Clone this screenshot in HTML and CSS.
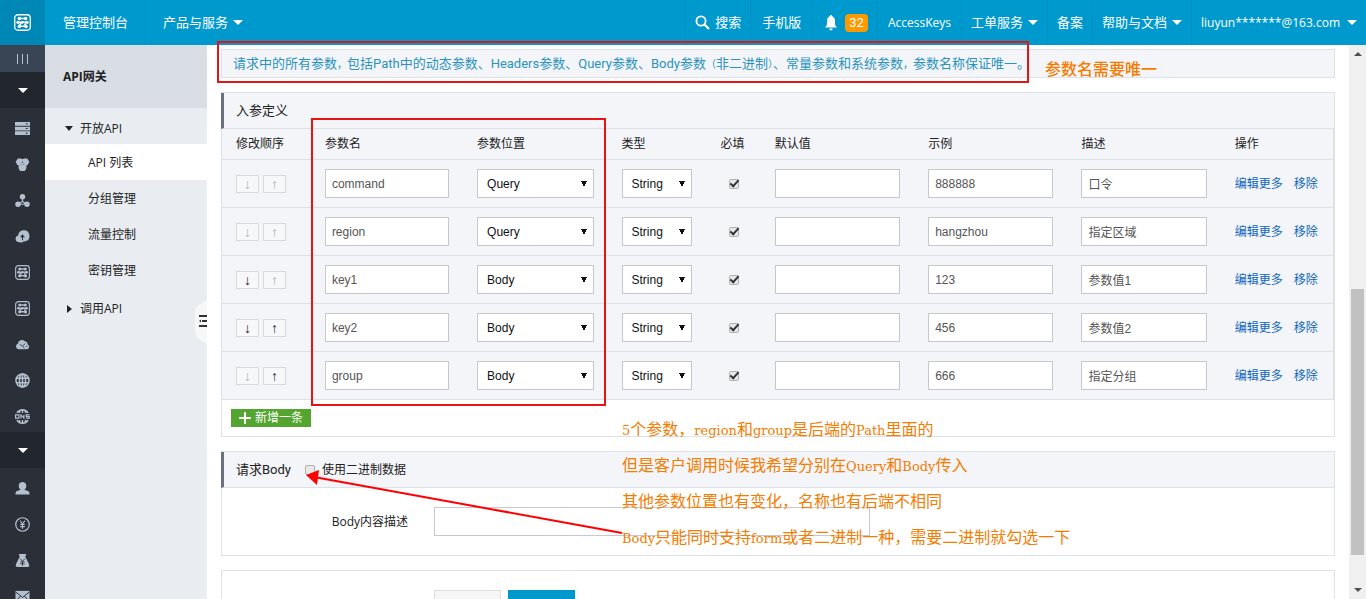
FILE: index.html
```html
<!DOCTYPE html>
<html lang="zh-CN">
<head>
<meta charset="utf-8">
<title>API网关</title>
<link rel="stylesheet" href="styles.css">
</head>
<body>
<svg class="defs" aria-hidden="true">
  <symbol id="i-cloud" viewBox="0 0 16 16"><rect x=".7" y=".7" width="14.6" height="14.6" rx="3" fill="none" stroke="currentColor" stroke-width="1.2"/><path d="M4.500 4.200h7M3 7.800h10M7 8l-2.500 3.500h7M10 9l2 3" fill="none" stroke="currentColor" stroke-width="1.500"/><g fill="currentColor"><circle cx="5" cy="4.200" r="1.600"/><circle cx="11" cy="4.200" r="1.600"/><circle cx="3.700" cy="7.800" r="1.500"/><circle cx="8" cy="7.800" r="1.300"/><circle cx="12.300" cy="7.800" r="1.500"/><circle cx="5" cy="11.700" r="1.500"/><circle cx="11.300" cy="11.700" r="1.600"/></g></symbol>
  <symbol id="i-server" viewBox="0 0 16 16"><path fill="currentColor" fill-rule="evenodd" d="M0 1h16v4H0zM0 6h16v4H0zM0 11h16v4H0zM11.500 2.500v1h2v-1zM11.500 7.500v1h2v-1zM11.500 12.500v1h2v-1z"/></symbol>
  <symbol id="i-hex" viewBox="0 0 16 16"><path fill="currentColor" d="M3 1.500h3.500L8 2.500l1.500-1H13L15.300 5 13.500 8.500 12 9l.3 2.800-1.800 3h-5l-1.800-3L4 9l-1.500-.5L.7 5z"/><g fill="#2a2f38"><circle cx="8" cy="5.500" r=".7"/><circle cx="6.500" cy="8" r=".5"/><circle cx="9.500" cy="8" r=".5"/></g></symbol>
  <symbol id="i-nodes" viewBox="0 0 16 16"><path d="M8 4v5L3.500 12h9L8 9" fill="none" stroke="currentColor" stroke-width="1.300"/><g fill="currentColor"><circle cx="8" cy="4" r="2.900"/><circle cx="3.200" cy="12" r="2.900"/><circle cx="12.800" cy="12" r="2.900"/></g></symbol>
  <symbol id="i-cdn" viewBox="0 0 16 16"><path fill="currentColor" d="M4 14a3.600 3.600 0 0 1-.6-7.100A6 6 0 1 1 11.500 13l-2.500.3-1 1z"/><path d="M8 6.500v5.500M6 9l2-2.500L10 9" fill="none" stroke="#2a2f38" stroke-width="1.100"/></symbol>
  <symbol id="i-clouds" viewBox="0 0 16 16"><path fill="currentColor" d="M3.500 13a3 3 0 0 1-.4-5.800A4.300 4.300 0 0 1 10.500 4.500 3.600 3.600 0 0 1 13.500 8a2.600 2.600 0 0 1-.5 5z"/><path d="M5 8l3 1.500 3-2.500M8 9.500l2 2.500M11.500 9.500l2 1" fill="none" stroke="#2a2f38" stroke-width=".8"/></symbol>
  <symbol id="i-globe" viewBox="0 0 16 16"><g fill="none" stroke="currentColor" stroke-width="1.600"><circle cx="8" cy="8" r="7"/><ellipse cx="8" cy="8" rx="3.300" ry="7"/><path d="M8 1v14M2 5.500h12M2 10.500h12"/></g></symbol>
  <symbol id="i-ons" viewBox="0 0 16 16"><g fill="none" stroke="currentColor" stroke-width="1.500"><path d="M2 4.200a7 7 0 0 1 12 0M2 11.800a7 7 0 0 0 12 0M8 1v3.200M8 11.800V15M5.300 2l-.8 2.200M10.700 2l.8 2.200M5.300 14l-.8-2.200M10.700 14l.8-2.200"/><path d="M.6 6.300h3.600v3.400H.6zM6.300 10V6.300l3.200 3.400V6M15.500 6.300h-3.600V8h3.300v1.700h-3.500" stroke-width="1.200"/></g></symbol>
  <symbol id="i-user" viewBox="0 0 16 16"><path fill="currentColor" d="M8 1a4 4 0 0 1 4 4.200c0 1.800-.8 3-2 4l4.500 1.600q1.200.8 1 3.700H.5q-.2-2.900 1-3.700L6 9.200c-1.200-1-2-2.200-2-4A4 4 0 0 1 8 1z"/></symbol>
  <symbol id="i-yen" viewBox="0 0 16 16"><g fill="none" stroke="currentColor" stroke-width="1.300"><circle cx="8" cy="8" r="7.200"/><path d="M5.500 4L8 7.500 10.500 4M8 7.500V12.500M5.500 8h5M5.500 10.200h5"/></g></symbol>
  <symbol id="i-bag" viewBox="0 0 16 16"><path fill="currentColor" d="M4 1h8l-1 3 4 8q.8 2.700-1 3H2q-1.800-.3-1-3l4-8z"/><path d="M5.500 6L8 9l2.500-3M8 9v4.500M5.700 9.500h4.600M5.700 11.500h4.600" fill="none" stroke="#2a2f38" stroke-width=".9"/></symbol>
  <symbol id="i-mail" viewBox="0 0 16 16"><path fill="currentColor" d="M.5 2h15v12H.5z"/><path d="M.5 3L8 9l7.500-6M1 13l5-5.500M15 13l-5-5.500" fill="none" stroke="#2a2f38"/></symbol>
</svg>

<header class="topbar">
  <a class="logo" href="#" aria-label="首页"><svg class="logo-icon"><use href="#i-cloud"/></svg></a>
  <a class="top-link console" href="#">管理控制台</a>
  <button class="top-link products">产品与服务<i class="caret"></i></button>
  <nav class="top-right">
    <button class="top-link"><svg class="search-icon" viewBox="0 0 15 15"><circle cx="6" cy="6" r="4.600" fill="none" stroke="currentColor" stroke-width="1.800"/><path d="M9.500 9.500l4.500 4.500" stroke="currentColor" stroke-width="2.200"/></svg>搜索</button>
    <a class="top-link mobile" href="#">手机版</a>
    <a class="top-link bell" href="#" aria-label="消息"><svg class="bell-icon" viewBox="0 0 12 16"><path fill="currentColor" d="M6 0q1.200 0 1.200 1.300Q10 2.200 10 6v3q0 1.500 2 3.500H0Q2 10.500 2 9V6q0-3.800 2.800-4.700Q4.800 0 6 0zM4.200 13.500h3.600Q7.500 15.500 6 15.500t-1.800-2z"/></svg><span class="badge">32</span></a>
    <a class="top-link keys" href="#">AccessKeys</a>
    <button class="top-link">工单服务<i class="caret"></i></button>
    <a class="top-link" href="#">备案</a>
    <button class="top-link">帮助与文档<i class="caret"></i></button>
    <button class="top-link user">liuyun*******@163.com<i class="caret"></i></button>
  </nav>
</header>

<div class="shell">
  <nav class="rail" aria-label="产品">
    <button class="rail-toggle" aria-label="收起"><i></i><i></i><i></i></button>
    <button class="rail-group" aria-label="产品分组"><i class="caret"></i></button>
    <a class="rail-item" href="#"><svg><use href="#i-server"/></svg></a>
    <a class="rail-item" href="#"><svg><use href="#i-hex"/></svg></a>
    <a class="rail-item" href="#"><svg><use href="#i-nodes"/></svg></a>
    <a class="rail-item" href="#"><svg><use href="#i-cdn"/></svg></a>
    <a class="rail-item" href="#"><svg><use href="#i-cloud"/></svg></a>
    <a class="rail-item" href="#"><svg><use href="#i-cloud"/></svg></a>
    <a class="rail-item" href="#"><svg><use href="#i-clouds"/></svg></a>
    <a class="rail-item" href="#"><svg><use href="#i-globe"/></svg></a>
    <a class="rail-item" href="#"><svg><use href="#i-ons"/></svg></a>
    <button class="rail-group" aria-label="用户分组"><i class="caret"></i></button>
    <a class="rail-item" href="#"><svg><use href="#i-user"/></svg></a>
    <a class="rail-item" href="#"><svg><use href="#i-yen"/></svg></a>
    <a class="rail-item" href="#"><svg><use href="#i-bag"/></svg></a>
    <a class="rail-item" href="#"><svg><use href="#i-mail"/></svg></a>
  </nav>

  <aside class="side">
    <h1 class="side-title">API网关</h1>
    <button class="side-group"><i class="tri-down"></i>开放API</button>
    <a class="side-item active" href="#">API 列表</a>
    <a class="side-item" href="#">分组管理</a>
    <a class="side-item" href="#">流量控制</a>
    <a class="side-item" href="#">密钥管理</a>
    <button class="side-group"><i class="tri-right"></i>调用API</button>
    <button class="side-knob" aria-label="收起菜单"><svg viewBox="0 0 12 44"><path d="M12 0L4 5Q0 8 0 12v20q0 4 4 7l8 5z" fill="#f7f8fa"/><path d="M4 16h8M7 21h5M4 26h8" stroke="#333" stroke-width="2"/><path d="M4 21l2-1.500v3z" fill="#333"/></svg></button>
  </aside>

  <main class="content">
    <p class="notice">请求中的所有参数<span class="tight">，</span>包括Path中的动态参数、Headers参数、Query参数、Body参数<span class="tight">（</span>非二进制<span class="tight">）</span>、常量参数和系统参数<span class="tight">，</span>参数名称保证唯一。</p>

    <section class="panel">
      <h2 class="panel-head">入参定义</h2>
      <table class="params">
        <colgroup><col class="c-order"><col class="c-name"><col class="c-place"><col class="c-type"><col class="c-req"><col class="c-text"><col class="c-text"><col class="c-text"><col class="c-act"></colgroup>
        <thead><tr><th>修改顺序</th><th>参数名</th><th>参数位置</th><th>类型</th><th>必填</th><th>默认值</th><th>示例</th><th>描述</th><th>操作</th></tr></thead>
        <tbody>
          <tr><td><div class="order"><button disabled aria-label="下移">↓</button><button disabled aria-label="上移">↑</button></div></td><td><input class="field" aria-label="参数名" value="command"></td><td><select class="field" aria-label="参数位置"><option>Query</option></select></td><td><select class="field" aria-label="类型"><option>String</option></select></td><td><input class="tick" type="checkbox" checked aria-label="必填"></td><td><input class="field" aria-label="默认值"></td><td><input class="field" aria-label="示例" value="888888"></td><td><input class="field" aria-label="描述" value="口令"></td><td><div class="acts"><a href="#">编辑更多</a><a href="#">移除</a></div></td></tr>
          <tr><td><div class="order"><button disabled aria-label="下移">↓</button><button disabled aria-label="上移">↑</button></div></td><td><input class="field" aria-label="参数名" value="region"></td><td><select class="field" aria-label="参数位置"><option>Query</option></select></td><td><select class="field" aria-label="类型"><option>String</option></select></td><td><input class="tick" type="checkbox" checked aria-label="必填"></td><td><input class="field" aria-label="默认值"></td><td><input class="field" aria-label="示例" value="hangzhou"></td><td><input class="field" aria-label="描述" value="指定区域"></td><td><div class="acts"><a href="#">编辑更多</a><a href="#">移除</a></div></td></tr>
          <tr><td><div class="order"><button aria-label="下移">↓</button><button disabled aria-label="上移">↑</button></div></td><td><input class="field" aria-label="参数名" value="key1"></td><td><select class="field" aria-label="参数位置"><option>Body</option></select></td><td><select class="field" aria-label="类型"><option>String</option></select></td><td><input class="tick" type="checkbox" checked aria-label="必填"></td><td><input class="field" aria-label="默认值"></td><td><input class="field" aria-label="示例" value="123"></td><td><input class="field" aria-label="描述" value="参数值1"></td><td><div class="acts"><a href="#">编辑更多</a><a href="#">移除</a></div></td></tr>
          <tr><td><div class="order"><button aria-label="下移">↓</button><button aria-label="上移">↑</button></div></td><td><input class="field" aria-label="参数名" value="key2"></td><td><select class="field" aria-label="参数位置"><option>Body</option></select></td><td><select class="field" aria-label="类型"><option>String</option></select></td><td><input class="tick" type="checkbox" checked aria-label="必填"></td><td><input class="field" aria-label="默认值"></td><td><input class="field" aria-label="示例" value="456"></td><td><input class="field" aria-label="描述" value="参数值2"></td><td><div class="acts"><a href="#">编辑更多</a><a href="#">移除</a></div></td></tr>
          <tr><td><div class="order"><button disabled aria-label="下移">↓</button><button aria-label="上移">↑</button></div></td><td><input class="field" aria-label="参数名" value="group"></td><td><select class="field" aria-label="参数位置"><option>Body</option></select></td><td><select class="field" aria-label="类型"><option>String</option></select></td><td><input class="tick" type="checkbox" checked aria-label="必填"></td><td><input class="field" aria-label="默认值"></td><td><input class="field" aria-label="示例" value="666"></td><td><input class="field" aria-label="描述" value="指定分组"></td><td><div class="acts"><a href="#">编辑更多</a><a href="#">移除</a></div></td></tr>
        </tbody>
      </table>
      <div class="panel-foot"><button class="add"><svg viewBox="0 0 12 12"><path d="M6 0v12M0 6h12" stroke="currentColor" stroke-width="2"/></svg>新增一条</button></div>
    </section>

    <section class="panel">
      <div class="panel-head"><h2>请求Body</h2><label class="binary"><input class="tick" type="checkbox">使用二进制数据</label></div>
      <div class="body-row"><label for="body-desc">Body内容描述</label><input class="field" id="body-desc"></div>
    </section>

    <section class="panel actions"><button class="prev" aria-label="上一步"></button><button class="next" aria-label="下一步"></button></section>
  </main>

  <div class="scroll" aria-hidden="true"><i class="arrow-up"></i><div class="track"><div class="thumb"></div></div><i class="arrow-down"></i></div>
</div>

<svg class="marks" aria-hidden="true">
  <g fill="none" stroke="#e81414" stroke-width="2"><rect x="218" y="42" width="810" height="40"/><rect x="312" y="119" width="293" height="286"/></g>
  <path d="M314 477L622 533" stroke="#f00" stroke-width="2"/><path d="M306 475l13-5-2 15z" fill="#f00"/>
</svg>
<p class="note note-unique">参数名需要唯一</p>
<div class="note note-list">
  <p><b>5</b>个参数，<b>region</b>和<b>group</b>是后端的<b>Path</b>里面的</p>
  <p>但是客户调用时候我希望分别在<b>Query</b>和<b>Body</b>传入</p>
  <p>其他参数位置也有变化，名称也有后端不相同</p>
  <p><b>Body</b>只能同时支持<b>form</b>或者二进制一种，需要二进制就勾选一下</p>
</div>
</body>
</html>
```

FILE: styles.css
```css
* { box-sizing: border-box; }
body {
  margin: 0;
  height: 100vh;
  display: flex;
  flex-direction: column;
  overflow: hidden;
  background: #fff;
  color: #222;
  font: 12px/18px "Open Sans", "Noto Sans CJK SC", sans-serif;
}
h1, h2, p { margin: 0; font-size: inherit; font-weight: normal; }
a { text-decoration: none; color: inherit; }
button { font: inherit; color: inherit; background: none; border: 0; padding: 0; }
.defs { display: none; }

.caret {
  flex: none;
  border: 5px solid transparent;
  border-top-color: currentColor;
  border-bottom-width: 0;
}

.topbar {
  flex: none;
  display: flex;
  height: 45px;
  background: #0099cd;
  color: #fff;
  font-family: Roboto, "Noto Sans CJK SC", sans-serif;
  font-size: 13px;
}
.logo {
  width: 45px;
  display: grid;
  place-items: center;
  background: #0087b6;
}
.logo-icon { width: 17px; height: 17px; }
.top-link {
  display: flex;
  align-items: center;
  gap: 5px;
  padding: 0 9px;
  border-right: 1px solid #008fc2;
  white-space: nowrap;
}
.console { padding: 0 17px 0 18px; }
.products { padding: 0 17px; border-right: 0; }
.top-right { display: flex; margin-left: auto; border-left: 1px solid #008fc2; }
.mobile { padding: 0 11px; }
.keys, .user { font-family: "Open Sans", sans-serif; font-size: 12px; }
.keys { padding: 0 10px; }
.user { gap: 7px; border-right: 0; }
.search-icon { width: 15px; height: 15px; }
.bell { gap: 8px; padding: 0 9px 0 12px; }
.bell-icon { width: 12px; height: 16px; }
.badge {
  padding: 0 4px;
  border-radius: 4px;
  background: #f90;
  font-size: 13px;
}

.shell { flex: 1; min-height: 0; display: flex; }

.rail {
  flex: none;
  width: 45px;
  display: flex;
  flex-direction: column;
  overflow: hidden;
  background: #2a2f38;
  color: #b4c0ce;
}
.rail > * { flex: none; }
.rail-toggle {
  height: 27px;
  display: flex;
  justify-content: center;
  align-items: center;
  gap: 4px;
  background: #394555;
}
.rail-toggle i { width: 1px; height: 10px; background: #b4c0ce; }
.rail-group {
  height: 36px;
  display: grid;
  place-items: center;
  background: #22262d;
  color: #fff;
}
.rail-item { height: 36px; padding-top: 4px; display: grid; place-items: center; }
.rail-item svg { width: 15px; height: 15px; }

.side {
  position: relative;
  flex: none;
  width: 162px;
  background: #e9edf2;
}
.side-title {
  height: 63px;
  padding-left: 18px;
  background: #d9dee4;
  font-weight: bold;
  line-height: 63px;
}
.side-group {
  width: 100%;
  height: 36px;
  padding: 5px 0 0 20px;
  display: flex;
  align-items: center;
  gap: 7px;
}
.tri-down { border: 4px solid transparent; border-top: 5px solid #222; border-bottom-width: 0; }
.tri-right { margin: 0 1px 0 2px; border: 4px solid transparent; border-left: 5px solid #222; border-right-width: 0; }
.side-item { display: block; height: 36px; padding: 10px 0 0 43px; }
.side-item.active { background: #fff; }
.side-knob { position: absolute; right: 0; top: 255px; width: 12px; height: 44px; }
.side-knob svg { display: block; width: 12px; height: 44px; }

.content {
  flex: 1;
  min-width: 0;
  padding: 4px 14px 0;
  display: flex;
  flex-direction: column;
  gap: 14px;
  overflow: hidden;
}
.content > * { flex: none; }
.notice {
  padding: 5px 11px;
  border: 1px solid #dde1e8;
  background: #f4f5f9;
  color: #2a93c0;
  font: 13px/17px Roboto, "Noto Sans CJK SC", sans-serif;
}
.tight { font-size: 10px; line-height: 10px; }
.panel { border: 1px solid #dde1e8; }
.panel-head {
  display: flex;
  align-items: center;
  gap: 14px;
  height: 36px;
  margin-left: -1px;
  padding-left: 12px;
  border-left: 3px solid #6d7080;
  border-bottom: 1px solid #dde1e8;
  background: #f3f5f9;
  font-family: Roboto, "Noto Sans CJK SC", sans-serif;
  font-size: 13px;
}
.binary { display: flex; align-items: center; gap: 7px; font-size: 12px; }

.params {
  width: 100%;
  table-layout: fixed;
  border-collapse: separate;
  border-spacing: 0;
  border-right: 1px solid #dde1e8;
  background: #f3f5f9;
}
.params th, .params td {
  padding: 0 14px;
  border-bottom: 1px solid #dde1e8;
  text-align: left;
  font-weight: normal;
  white-space: nowrap;
}
.params th { height: 31px; }
.params td { height: 48px; }
.c-order { width: 8%; }
.c-name { width: 13.7%; }
.c-place { width: 13%; }
.c-type { width: 8.9%; }
.c-req { width: 4.9%; }
.c-text { width: 13.8%; }

.order { display: flex; gap: 4px; }
.order button {
  width: 23px;
  height: 18px;
  border: 1px solid #d8d8d8;
  background: #f7f8fa;
  color: #222;
  font: 14px/14px "Liberation Sans", sans-serif;
}
.order button:disabled { color: #b5b5b5; }
.field {
  display: block;
  width: 100%;
  height: 29px;
  margin: 0;
  padding: 0 6px;
  border: 1px solid #c5c9cf;
  border-radius: 0;
  background: #fff;
  color: #555;
  font: 12px/18px "Liberation Sans", "Noto Sans CJK SC", sans-serif;
}
select.field {
  appearance: none;
  padding-left: 9px;
  color: #111;
  background:
    linear-gradient(to bottom right, #111 50%, transparent 50%) right 6px center / 3px 6px no-repeat,
    linear-gradient(to bottom left, #111 50%, transparent 50%) right 9px center / 3px 6px no-repeat,
    #fff;
}
.tick {
  appearance: none;
  display: grid;
  place-items: center;
  width: 10px;
  height: 10px;
  margin: 0 auto;
  border: 1px solid #b0b0b0;
  border-radius: 2px;
  background: #e8e8e8;
}
.tick:checked::before {
  content: "";
  width: 7px;
  height: 3px;
  margin-bottom: 3px;
  border: solid #333;
  border-width: 0 0 2px 2px;
  transform: rotate(-48deg);
}
.acts { display: flex; gap: 11px; color: #1166bb; }

.panel-foot { padding: 9px; }
.add {
  display: flex;
  align-items: center;
  gap: 4px;
  padding: 0 8px;
  background: #54a52f;
  color: #fff;
}
.add svg { width: 12px; height: 12px; }

.body-row {
  display: grid;
  grid-template-columns: 186px 436px;
  gap: 26px;
  align-items: center;
  padding: 19px 0;
}
.body-row label { text-align: right; }
.actions { display: flex; gap: 7px; padding: 19px 212px; }
.prev, .next { width: 67px; height: 30px; }
.prev { border: 1px solid #ddd; background: #f6f6f6; }
.next { background: #0099cd; }

.scroll {
  flex: none;
  width: 17px;
  display: flex;
  flex-direction: column;
  align-items: center;
  padding: 7px 0;
  background: #f0f0f0;
}
.track { flex: 1; width: 13px; padding-top: 233px; }
.thumb { height: 266px; background: #c1c1c1; }
.arrow-up, .arrow-down { border: 4px solid transparent; }
.arrow-up { border-bottom-color: #505050; border-top-width: 0; }
.arrow-down { border-top-color: #505050; border-bottom-width: 0; }

.marks { position: absolute; inset: 0; width: 100%; height: 100%; pointer-events: none; }
.note {
  position: absolute;
  color: #f57c00;
  font: 16px/36px "Noto Sans CJK SC", sans-serif;
  font-weight: 500;
  white-space: nowrap;
}
.note b { font: 13px "DejaVu Serif", serif; }
.note-unique { left: 1045px; top: 50px; }
.note-list { left: 622px; top: 410px; }
```
